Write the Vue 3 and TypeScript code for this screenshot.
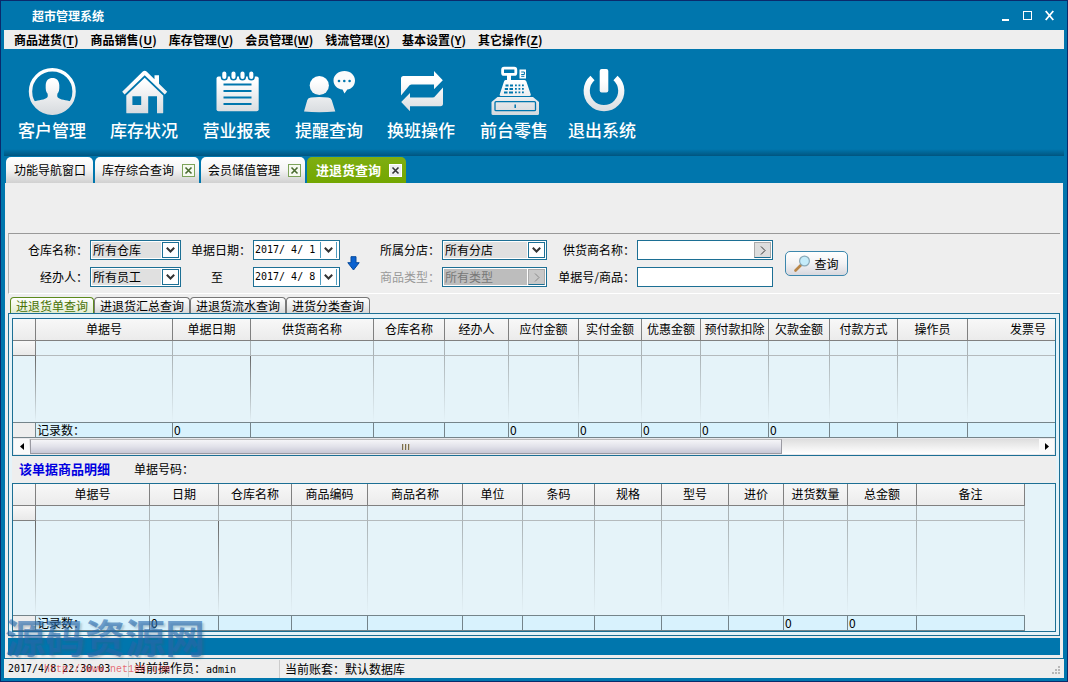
<script setup lang="ts">
import { ref } from 'vue'

interface Column { title: string; width: number; total?: string; strong?: boolean }

const menus = [
  { name: '商品进货', key: 'T' },
  { name: '商品销售', key: 'U' },
  { name: '库存管理', key: 'V' },
  { name: '会员管理', key: 'W' },
  { name: '钱流管理', key: 'X' },
  { name: '基本设置', key: 'Y' },
  { name: '其它操作', key: 'Z' },
]

const tabs = [
  { name: '功能导航窗口', closable: false },
  { name: '库存综合查询', closable: true },
  { name: '会员储值管理', closable: true },
  { name: '进退货查询', closable: true },
]
const activeTab = ref(3)

const subTabs = ['进退货单查询', '进退货汇总查询', '进退货流水查询', '进货分类查询']
const activeSub = ref(0)

const orders: Column[] = [
  { title: '单据号', width: 137, total: '记录数：' },
  { title: '单据日期', width: 78, total: '0', strong: true },
  { title: '供货商名称', width: 123 },
  { title: '仓库名称', width: 71 },
  { title: '经办人', width: 64 },
  { title: '应付金额', width: 70, total: '0' },
  { title: '实付金额', width: 63, total: '0' },
  { title: '优惠金额', width: 59, total: '0' },
  { title: '预付款扣除', width: 68, total: '0' },
  { title: '欠款金额', width: 61, total: '0' },
  { title: '付款方式', width: 68 },
  { title: '操作员', width: 70 },
  { title: '发票号', width: 121 },
]

const details: Column[] = [
  { title: '单据号', width: 114, total: '记录数：' },
  { title: '日期', width: 69, total: '0', strong: true },
  { title: '仓库名称', width: 73 },
  { title: '商品编码', width: 76 },
  { title: '商品名称', width: 95 },
  { title: '单位', width: 60 },
  { title: '条码', width: 72 },
  { title: '规格', width: 67 },
  { title: '型号', width: 67 },
  { title: '进价', width: 55 },
  { title: '进货数量', width: 64, total: '0' },
  { title: '总金额', width: 69, total: '0' },
  { title: '备注', width: 108 },
]

const tableWidth = (cols: Column[]) => 23 + cols.reduce((sum, c) => sum + c.width, 0)

const dateFrom = ref('2017/ 4/ 1')
const dateTo = ref('2017/ 4/ 8')
const supplier = ref('')
const keyword = ref('')
const keys = [0, 1, 2, 3, 4, 5]
</script>

<template>
  <div class="window">
    <header class="titlebar">
      <h1>超市管理系统</h1>
      <div class="controls">
        <button type="button" aria-label="最小化"><svg width="9" height="11" viewBox="0 0 9 11"><rect x="1" y="9" width="7" height="2" fill="#fff" /></svg></button>
        <button type="button" aria-label="最大化"><svg width="9" height="11" viewBox="0 0 9 11"><rect x=".5" y="1.5" width="8" height="8" fill="none" stroke="#fff" /></svg></button>
        <button type="button" aria-label="关闭"><svg width="9" height="11" viewBox="0 0 9 11"><path d="M.7 1l7.6 9M8.3 1L.7 10" stroke="#fff" stroke-width="1.8" /></svg></button>
      </div>
    </header>

    <nav class="menubar">
      <button v-for="m in menus" :key="m.key" type="button">{{ m.name }}(<u>{{ m.key }}</u>)</button>
    </nav>

    <div class="toolbar">
      <svg class="defs" width="0" height="0" aria-hidden="true">
        <defs>
          <linearGradient id="silver" gradientUnits="userSpaceOnUse" x1="0" y1="0" x2="0" y2="50">
            <stop offset=".3" stop-color="#fff" />
            <stop offset="1" stop-color="#d4d8dc" />
          </linearGradient>
        </defs>
      </svg>

      <button type="button" class="tool">
        <svg width="52" height="50" viewBox="0 0 52 50">
          <circle cx="26.3" cy="25.5" r="21.8" fill="none" stroke="url(#silver)" stroke-width="3.4" />
          <path fill="url(#silver)" d="M7 36C10 34 17 34.500 20.500 32C22 31 22 29.500 21.500 27.500C20 26.500 19.500 23 19.700 19C20 14.500 22.500 12 26.500 12S33 14.500 33.300 19C33.500 23 33 26.500 31.500 27.500C31 29.500 31 31 32.500 32C36 34.500 43 34 46 36C42 43.500 35 48.200 26.500 48.200S11 43.500 7 36Z" />
        </svg>
        <span>客户管理</span>
      </button>
      <button type="button" class="tool">
        <svg width="52" height="50" viewBox="0 0 52 50">
          <path fill="url(#silver)" d="M4.200 25.800L24.800 5.600Q26.700 4 28.600 5.600L36.500 13.300V9.300H41V17.800L49.200 25.800L46.800 28.500L26.700 9.200L6.600 28.500Z" />
          <path fill="url(#silver)" fill-rule="evenodd" d="M26.700 11.800L45.200 29.500V46.700Q45.200 47.300 44.500 47.300H39V30.200H30.200V47.300H9Q8.300 47.300 8.300 46.700V29.500ZM14.400 30.200V39H23.200V30.200Z" />
        </svg>
        <span>库存状况</span>
      </button>
      <button type="button" class="tool">
        <svg width="52" height="50" viewBox="0 0 52 50">
          <rect x="5.500" y="10.500" width="42.200" height="34.800" rx="2" fill="url(#silver)" />
          <g fill="#fff" stroke="#0076ad" stroke-width="1.500">
            <rect x="10.500" y="4.800" width="5.600" height="9" rx="2.800" />
            <rect x="19.700" y="4.800" width="5.600" height="9" rx="2.800" />
            <rect x="28.700" y="4.800" width="5.600" height="9" rx="2.800" />
            <rect x="37.500" y="4.800" width="5.600" height="9" rx="2.800" />
          </g>
          <path stroke="#0076ad" stroke-width="2" d="M12.500 18.500h28M12.500 25h28M12.500 31.500h28M12.500 38h28" />
        </svg>
        <span>营业报表</span>
      </button>
      <button type="button" class="tool">
        <svg width="52" height="50" viewBox="0 0 52 50">
          <circle cx="16.300" cy="19.500" r="9.600" fill="url(#silver)" />
          <path fill="url(#silver)" d="M1 45.500L4.300 34Q5 31.800 8 31.600Q16 30.500 25 31.600Q28 31.800 28.700 34L32.300 45.500Q16 46.800 1 45.500Z" />
          <path fill="#fbfbfb" d="M41.500 5C47.500 5 52 9.200 52 14.400C52 19.500 48.500 23 44.300 23.600L41.500 27.500L39.500 23.600C34 22.800 30.500 19 30.500 14.400C30.500 9.200 35.300 5 41.500 5Z" />
          <g fill="#0076ad"><circle cx="36" cy="15" r="1.300" /><circle cx="41.300" cy="15" r="1.300" /><circle cx="46.600" cy="15" r="1.300" /></g>
        </svg>
        <span>提醒查询</span>
      </button>
      <button type="button" class="tool">
        <svg width="52" height="50" viewBox="0 0 52 50">
          <path fill="url(#silver)" d="M6 29.500V12.500Q6 10 8.500 10H39V5L47.800 14.200L39 23.300V18.600H16.500Q14.600 18.600 13.700 20.200Z" />
          <path fill="url(#silver)" d="M48 21.500V37.500Q48 40.200 45.500 40.200H15V45.200L6.200 36L15 27V31.600H37.500Q39.400 31.600 40.300 30Z" />
        </svg>
        <span>换班操作</span>
      </button>
      <button type="button" class="tool">
        <svg width="52" height="50" viewBox="0 0 52 50">
          <rect x="14.600" y="2.200" width="13.200" height="6.200" rx="1.500" fill="none" stroke="#fff" stroke-width="2.800" />
          <path fill="#fff" d="M19 9h4v5.500h-4zM31.500 3.500H38V12.500H31.500Z" />
          <path fill="none" stroke="#0076ad" d="M33.200 6h3.200v2.500h-3.200M33.200 10.300h3.200" />
          <path fill="url(#silver)" d="M17.500 14H36.500Q38 14 38.400 15.500L42.800 28.500Q43 30 41.500 30H13Q11.400 30 11.700 28.500L16 15.500Q16.300 14 17.500 14Z" />
          <g fill="#0076ad">
            <path d="M17.500 18.500h3v2h-3zM22 18.500h3v2h-3zM16.800 22h3.200v2h-3.200zM21.500 22h3.500v2h-3.500zM16 25.500h3.500v2H16zM21 25.500h4v2h-4z" />
            <path v-for="k in keys" :key="k" :d="`M${27 + (k % 3) * 3.500} ${k < 3 ? 18.500 : 22}h1.800v1.800h-1.800zM${27 + (k % 3) * 3.500} ${k < 3 ? 25.500 : 22}h1.800v1.800h-1.800z`" />
          </g>
          <path fill="url(#silver)" d="M9.500 31H45L51 36V47.500Q51 49 49.500 49H5Q3.500 49 3.500 47.500V36Z" />
          <rect x="7" y="35.700" width="40.500" height="9" rx="1" fill="none" stroke="#0076ad" stroke-width="1.300" />
          <path stroke="#0076ad" stroke-width="1.500" d="M27.200 38.500v3.500" />
        </svg>
        <span>前台零售</span>
      </button>
      <button type="button" class="tool">
        <svg width="52" height="50" viewBox="0 0 52 50">
          <path fill="none" stroke="url(#silver)" stroke-width="6.200" d="M16.500 12A17.300 17.300 0 1 0 39.500 12" />
          <rect x="23.700" y="3" width="8.600" height="23.500" rx="2" fill="url(#silver)" />
        </svg>
        <span>退出系统</span>
      </button>
    </div>

    <div class="tabs">
      <div v-for="(t, i) in tabs" :key="t.name" class="tab" :class="{ active: i === activeTab, closable: t.closable }">
        <button type="button" @click="activeTab = i">{{ t.name }}</button>
        <button v-if="t.closable" type="button" class="close" :aria-label="'关闭' + t.name">
          <svg width="11" height="11" viewBox="0 0 11 11"><path d="M2.500 2.500l6 6M8.500 2.500l-6 6" stroke="currentColor" stroke-width="1.600" /></svg>
        </button>
      </div>
    </div>

    <main class="content">
      <form class="filters" @submit.prevent>
        <label for="warehouse">仓库名称：</label>
        <div class="combo">
          <select id="warehouse"><option>所有仓库</option></select>
          <span class="drop"><svg width="9" height="6" viewBox="0 0 9 6"><path d="M.8.8l3.700 3.700L8.200.8" /></svg></span>
        </div>
        <label for="from">单据日期：</label>
        <div class="combo date">
          <input id="from" v-model="dateFrom" type="text">
          <span class="drop"><svg width="9" height="6" viewBox="0 0 9 6"><path d="M.8.8l3.700 3.700L8.200.8" /></svg></span>
        </div>
        <svg class="down" width="13" height="15" viewBox="0 0 13 15"><path d="M4 .7h5v6h3.200L6.500 14L.8 6.700H4Z" fill="#0a62d0" stroke="#064a9c" /></svg>
        <label for="branch">所属分店：</label>
        <div class="combo">
          <select id="branch"><option>所有分店</option></select>
          <span class="drop"><svg width="9" height="6" viewBox="0 0 9 6"><path d="M.8.8l3.700 3.700L8.200.8" /></svg></span>
        </div>
        <label for="supplier">供货商名称：</label>
        <div class="combo lookup">
          <input id="supplier" v-model="supplier" type="text">
          <button type="button" class="more" aria-label="选择供货商"><svg width="6" height="9" viewBox="0 0 6 9"><path d="M1 .5l4 4l-4 4" /></svg></button>
        </div>
        <button type="submit" class="search">
          <svg width="17" height="17" viewBox="0 0 17 17">
            <path d="M1.500 15.500L7 10" stroke="#b98547" stroke-width="2.600" stroke-linecap="round" />
            <circle cx="10.500" cy="6" r="4.900" fill="#c5ecfa" stroke="#8aa9b8" stroke-width="1.200" />
          </svg>
          查询
        </button>

        <label for="handler">经办人：</label>
        <div class="combo">
          <select id="handler"><option>所有员工</option></select>
          <span class="drop"><svg width="9" height="6" viewBox="0 0 9 6"><path d="M.8.8l3.700 3.700L8.200.8" /></svg></span>
        </div>
        <label for="to" class="mid">至</label>
        <div class="combo date">
          <input id="to" v-model="dateTo" type="text">
          <span class="drop"><svg width="9" height="6" viewBox="0 0 9 6"><path d="M.8.8l3.700 3.700L8.200.8" /></svg></span>
        </div>
        <label for="kind" class="off">商品类型：</label>
        <div class="combo disabled">
          <select id="kind" disabled><option>所有类型</option></select>
          <span class="more"><svg width="6" height="9" viewBox="0 0 6 9"><path d="M1 .5l4 4l-4 4" /></svg></span>
        </div>
        <label for="keyword">单据号/商品：</label>
        <div class="combo"><input id="keyword" v-model="keyword" type="text"></div>
      </form>

      <div class="subtabs">
        <button v-for="(s, i) in subTabs" :key="s" type="button" :class="{ active: i === activeSub }" @click="activeSub = i">{{ s }}</button>
      </div>

      <section class="page">
        <div class="grid">
          <div class="clip">
            <table :style="{ width: tableWidth(orders) + 'px' }">
              <colgroup><col class="mark"><col v-for="c in orders" :key="c.title" :style="{ width: c.width + 'px' }"></colgroup>
              <thead><tr><th></th><th v-for="c in orders" :key="c.title">{{ c.title }}</th></tr></thead>
              <tbody>
                <tr class="first"><td></td><td v-for="c in orders" :key="c.title"></td></tr>
                <tr class="rest"><td class="strong"></td><td v-for="c in orders" :key="c.title" :class="{ strong: c.strong }"></td></tr>
              </tbody>
              <tfoot><tr><td></td><td v-for="c in orders" :key="c.title">{{ c.total }}</td></tr></tfoot>
            </table>
          </div>
          <div class="scrollbar">
            <button type="button" aria-label="向左滚动"><svg width="4" height="7" viewBox="0 0 4 7"><path d="M4 0v7L0 3.500Z" /></svg></button>
            <div class="track"><div class="thumb"><i></i><i></i><i></i></div></div>
            <button type="button" aria-label="向右滚动"><svg width="4" height="7" viewBox="0 0 4 7"><path d="M0 0v7L4 3.500Z" /></svg></button>
          </div>
        </div>

        <div class="caption"><h2>该单据商品明细</h2><span>单据号码：</span></div>

        <div class="grid detail">
          <table :style="{ width: tableWidth(details) + 'px' }">
            <colgroup><col class="mark"><col v-for="c in details" :key="c.title" :style="{ width: c.width + 'px' }"></colgroup>
            <thead><tr><th></th><th v-for="c in details" :key="c.title">{{ c.title }}</th></tr></thead>
            <tbody>
              <tr class="first"><td></td><td v-for="c in details" :key="c.title"></td></tr>
              <tr class="rest"><td class="strong"></td><td v-for="c in details" :key="c.title" :class="{ strong: c.strong }"></td></tr>
            </tbody>
            <tfoot><tr><td></td><td v-for="c in details" :key="c.title">{{ c.total }}</td></tr></tfoot>
          </table>
        </div>
      </section>
      <div class="band"></div>
    </main>

    <footer class="status">
      <span class="clock mono">2017/4/8 22:30:03</span>
      <span class="user">当前操作员：<span class="mono">admin</span></span>
      <span class="book">当前账套：默认数据库</span>
      <svg class="grip" width="9" height="9" viewBox="0 0 9 9" fill="#b8b8b8"><path d="M6 0h2v2H6zM3 3h2v2H3zM6 3h2v2H6zM0 6h2v2H0zM3 6h2v2H3zM6 6h2v2H6z" /></svg>
    </footer>

    <div class="stamp">源码资源网</div>
    <div class="stamp-url">http://www.net188.com</div>
  </div>
</template>

<style>
body { margin: 0; }
</style>

<style scoped>
.window, .window * { box-sizing: border-box; }
.window {
  position: relative;
  display: flex;
  flex-direction: column;
  min-height: 100vh;
  padding: 0 3px 3px;
  border: 1px solid #0a2a6c;
  background: #0076ad;
  color: #000;
  font: 12px/16px "Noto Sans CJK SC", sans-serif;
  overflow: hidden;
}
button, input, select { font: inherit; color: inherit; margin: 0; padding: 0; border: 0; background: none; border-radius: 0; }
svg { display: block; }
.mono { font: 10px/16px "DejaVu Sans Mono", monospace; }

.titlebar { display: flex; justify-content: space-between; align-items: center; height: 29px; padding: 0 10px 0 28px; color: #fff; }
.titlebar h1 { margin: 0; font-size: 12px; line-height: 16px; font-weight: 700; }
.controls { display: flex; gap: 13px; }

.menubar { display: flex; gap: 12px; height: 19px; padding-left: 10px; background: #eee; }
.menubar button { font-weight: 700; line-height: 19px; white-space: nowrap; }
.menubar u { text-underline-offset: 2px; }

.toolbar {
  display: grid;
  grid-template-columns: 92px 92px 93px 92px 92px 94px 82px;
  height: 107px;
  padding: 17px 2px 0;
  background: linear-gradient(#0076ad, #005580) bottom / 100% 7px no-repeat;
}
.defs { position: absolute; }
.tool { display: flex; flex-direction: column; align-items: center; justify-content: flex-start; gap: 3px; color: #fff; font-size: 17px; line-height: 22px; font-weight: 500; white-space: nowrap; }

.tabs { display: flex; gap: 2px; height: 27px; padding: 1px 2px 0; }
.tab { display: flex; align-items: center; gap: 8px; padding: 0 7px 0 8px; border-radius: 5px 5px 0 0; background: linear-gradient(#fff, #f4f4f4 50%, #d0d0d0); white-space: nowrap; }
.tab.closable { padding: 0 4px 0 7px; }
.tab.active { padding: 0 4px 0 9px; background: linear-gradient(#7fae12, #72a600); color: #fff; font-size: 13px; font-weight: 700; }
.close { border: 1px solid #7da35a; background: #f6faf0; color: #4a6b30; }
.active .close { border-color: #fff; background: #eee; color: #333; }

.content { flex: 1; display: flex; flex-direction: column; margin: 0 1px; padding: 50px 3px 3px; background: #eee; border-bottom: 1px solid #1c6f94; }

.filters {
  display: grid;
  grid-template-columns: 81px 91px 72px 87px 40px 62px 105px 90px 136px auto;
  grid-auto-rows: 20px;
  row-gap: 7px;
  padding: 6px 0;
  border: 1px solid #fff;
  border-top-color: #999;
  border-left-color: #b0b0b0;
  border-right: 0;
}
.filters label { padding-right: 2px; text-align: right; line-height: 20px; white-space: nowrap; }
.filters .mid { text-align: center; padding: 0; }
.filters .off { color: #999; }
.down { grid-row: 1 / 3; grid-column: 5; align-self: center; margin-left: 7px; }
.combo { display: flex; min-width: 0; padding: 1px; border: 1px solid #1c6f94; background: #fff; }
.combo select { appearance: none; flex: 1; min-width: 0; padding-left: 1px; background: #e0e0e0; line-height: 16px; }
.combo input { flex: 1; min-width: 0; width: 0; outline: 0; }
.drop { display: flex; align-items: center; justify-content: center; width: 17px; margin-left: 1px; border: 1px solid #1c6f94; background: #fff; }
.drop path { fill: none; stroke: #333; stroke-width: 2; }
.date input { font: 10px/16px "DejaVu Sans Mono", monospace; }
.date .drop { margin: 0 1px 0 0; border-width: 0 1px; border-color: #4f9cc0; }
.more { display: flex; align-items: center; justify-content: center; width: 17px; border: 1px solid #aaa; border-bottom-color: #1c6f94; background: #ddd; }
.more path { fill: none; stroke: #333; }
.disabled select { background: #bdbdbd; color: #777; opacity: 1; }
.disabled .more { margin-left: 1px; background: #c8c8c8; }
.disabled .more path { stroke: #888; }
.search {
  grid-row: 1 / 3;
  grid-column: 10;
  align-self: center;
  display: flex;
  align-items: center;
  justify-content: center;
  gap: 3px;
  width: 63px;
  height: 25px;
  margin-left: 12px;
  border: 1px solid #3c87ad;
  border-radius: 5px;
  background: linear-gradient(#fff, #f2f2f4 50%, #d8d8de);
  white-space: nowrap;
}

.subtabs { display: flex; height: 19px; padding: 3px 2px 0; }
.subtabs button { padding: 0 5px; border: 1px solid #777; border-bottom: 0; border-radius: 4px 4px 0 0; background: linear-gradient(#fff, #eee 50%, #d8d8d8); line-height: 16px; white-space: nowrap; }
.subtabs .active { border-color: #5d8a1c; background: linear-gradient(#fff, #e2eccf); color: #4a7306; }

.page { flex: 1; display: flex; flex-direction: column; padding: 4px 3px 3px; border: 1px solid #1c6f94; background: #e5f3f9; }
.grid { border: 1px solid #1c6f94; background: #e5f3f9; min-width: 0; }
.clip { overflow: hidden; }
.detail { flex: 1; display: grid; justify-content: start; overflow: hidden; }
table { table-layout: fixed; border-collapse: separate; border-spacing: 0; }
.mark { width: 23px; }
th, td { padding: 0; border-right: 1px solid #aab2b5; overflow: hidden; white-space: nowrap; }
th { height: 22px; padding-bottom: 1px; border-right-color: #808080; border-bottom: 1px solid #808080; background: linear-gradient(#f8f8f8, #ebebeb); font-weight: 400; line-height: 18px; text-align: center; }
.first td { height: 15px; border-bottom: 1px solid #b4babd; }
.first td:first-child { border-color: #808080; background: linear-gradient(#f8f8f8, #e9e9e9); }
.rest td { height: 66px; border: 0; background: linear-gradient(#aab2b5, #e5f3f9) right / 1px 100% no-repeat; }
.rest .strong { background-image: linear-gradient(#666, #e5f3f9); }
.detail .rest td { height: auto; }
tfoot td { height: 16px; padding-left: 1px; border: 1px solid #75848a; border-left: 0; background: #d8f2fd; line-height: 14px; }
tfoot td:first-child { background: #eee; }

.scrollbar { display: flex; height: 17px; padding: 1px; background: #e8e8ec; }
.scrollbar button { display: flex; align-items: center; justify-content: center; width: 15px; background: #fafafa; }
.track { flex: 1; padding: 0 1px; background: linear-gradient(#dedede, #fff); }
.thumb { display: flex; align-items: center; justify-content: center; gap: 1px; width: calc(75% - 4px); height: 15px; border: 1px solid #9a9aa2; border-top-color: #bbb; background: linear-gradient(#f5f5f8, #e2e2ea 50%, #c8c8d6); }
.thumb i { width: 2px; height: 6px; background: linear-gradient(90deg, #756b52 50%, #d8cdb0 50%); }

.caption { display: flex; align-items: center; gap: 24px; height: 27px; padding: 0 0 2px 7px; background: #eee; }
.caption h2 { margin: 0; color: #0000e0; font-size: 13px; line-height: 18px; font-weight: 700; }

.band { height: 17px; margin-top: 2px; background: #0076ad; }

.status { display: flex; align-items: center; height: 19px; padding: 0 3px 0 4px; background: #eee; }
.clock { width: 121px; border-right: 1px solid #ccc; }
.user { width: 151px; padding-left: 5px; border-right: 1px solid #ccc; white-space: nowrap; }
.book { flex: 1; padding-left: 5px; }
.grip { align-self: flex-end; margin-bottom: 3px; }

.stamp { position: absolute; left: 4px; bottom: 24px; color: rgba(38, 104, 172, .6); font-size: 40px; line-height: 42px; font-weight: 700; text-shadow: 2px 2px 2px rgba(60, 90, 110, .25); white-space: nowrap; pointer-events: none; }
.stamp-url { position: absolute; left: 43px; bottom: 3px; color: rgba(226, 50, 60, .7); font: 10px/16px "Liberation Mono", monospace; white-space: nowrap; pointer-events: none; }
</style>
